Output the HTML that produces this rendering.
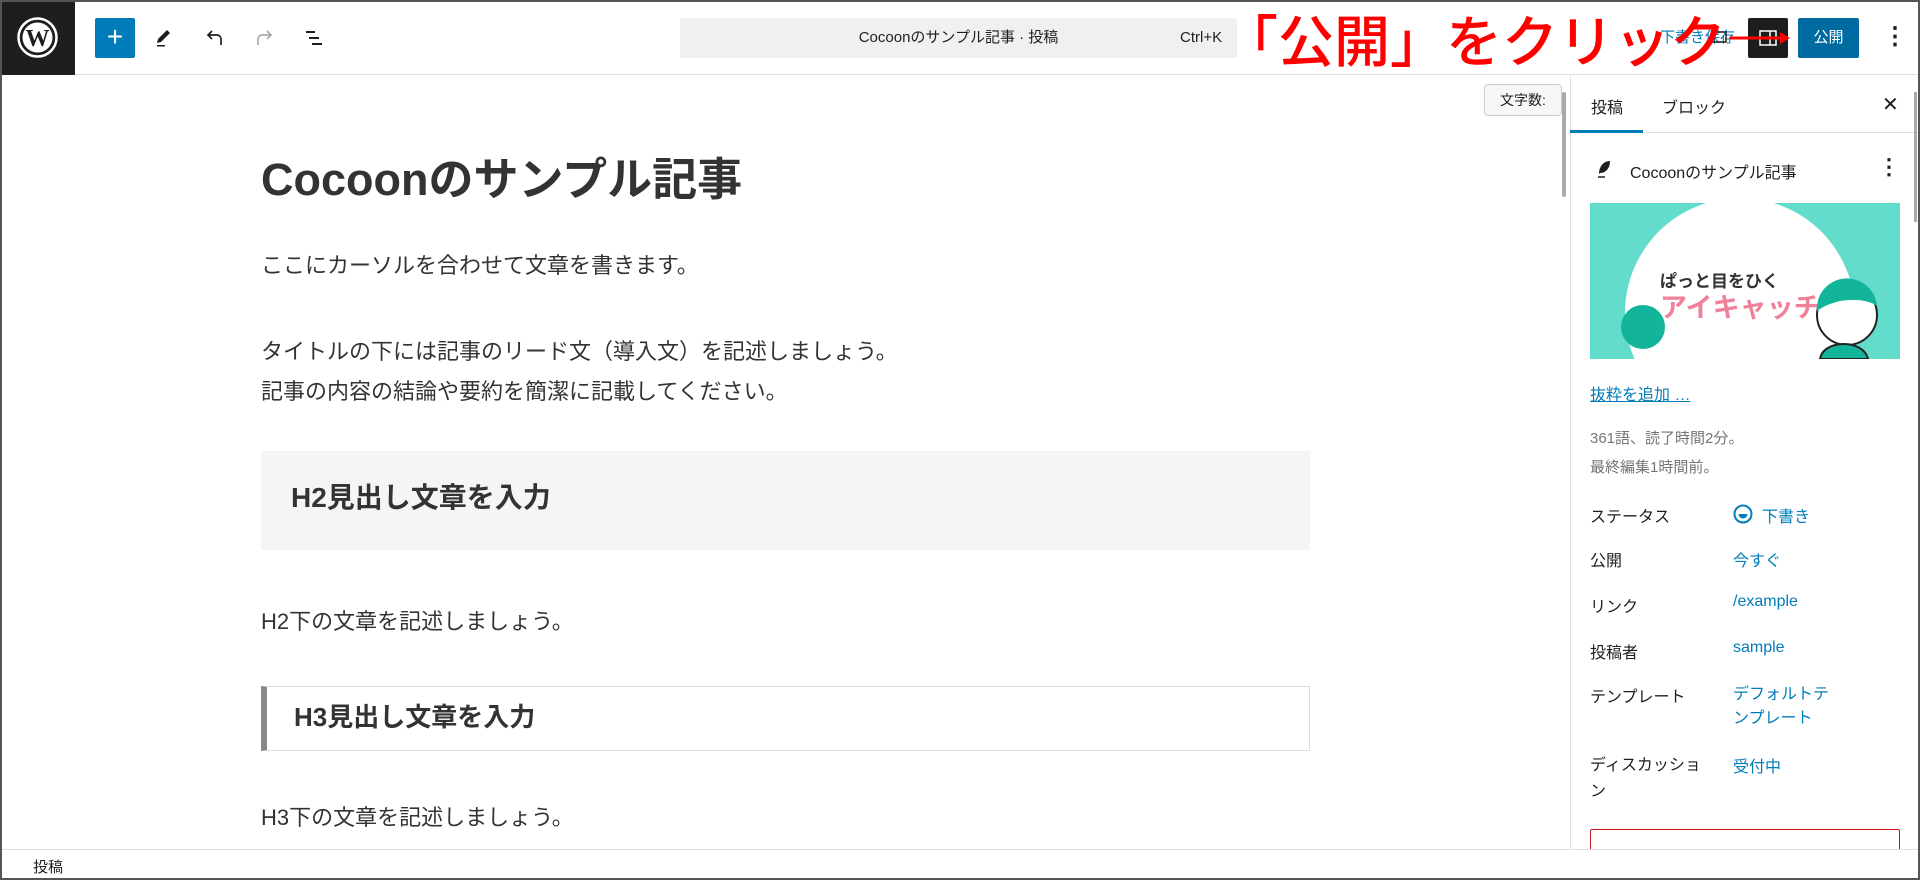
<!DOCTYPE html>
<html><head><meta charset="utf-8"><style>
*{margin:0;padding:0;box-sizing:border-box}
body{width:1920px;height:880px;overflow:hidden;background:#fff;font-family:"Liberation Sans","Noto Sans CJK JP",sans-serif;color:#1e1e1e;position:relative}
.frame{position:absolute;inset:0;border:2px solid #555;pointer-events:none;z-index:50}
.abs{position:absolute}
.top{position:absolute;left:0;top:0;width:1920px;height:75px;border-bottom:1px solid #e0e0e0}
.logo{position:absolute;left:0;top:0;width:75px;height:75px;background:#1e1e1e}
.side{position:absolute;left:1570px;top:75px;width:350px;height:774px;border-left:1px solid #e0e0e0}
.lbl{position:absolute;left:1590px;font-size:16px;color:#1e1e1e}
.val{position:absolute;left:1733px;font-size:16px;color:#007cba}
.p{position:absolute;left:261px;font-size:22px;color:#333;white-space:nowrap}
</style></head><body>
<div class="frame"></div>
<div class="top">
 <div class="logo">
  <svg width="75" height="75" viewBox="0 0 75 75"><circle cx="37.5" cy="37.5" r="19" fill="none" stroke="#fff" stroke-width="2.5"/><circle cx="37.5" cy="37.5" r="15" fill="#fff"/><text x="37.5" y="46" text-anchor="middle" font-family="Liberation Serif" font-weight="bold" font-size="24" fill="#1e1e1e">W</text></svg>
 </div>
 <div class="abs" style="left:95px;top:18px;width:40px;height:40px;background:#007cba;border-radius:2px;color:#fff;font-size:28px;line-height:38px;text-align:center">+</div>
 <svg class="abs" style="left:152px;top:26px" width="24" height="24" viewBox="0 0 24 24"><path d="M15 4l3 3-9 9-4 1 1-4z" fill="#1e1e1e"/><rect x="5" y="19" width="8" height="1.5" fill="#1e1e1e"/></svg>
 <svg class="abs" style="left:203px;top:26px" width="24" height="24" viewBox="0 0 24 24"><path d="M18 19v-6a4 4 0 0 0-4-4H5M9 5L5 9l4 4" fill="none" stroke="#1e1e1e" stroke-width="1.7"/></svg>
 <svg class="abs" style="left:252px;top:26px" width="24" height="24" viewBox="0 0 24 24"><path d="M6 19v-6a4 4 0 0 1 4-4h9M15 5l4 4-4 4" fill="none" stroke="#aaa" stroke-width="1.7"/></svg>
 <svg class="abs" style="left:302px;top:26px" width="24" height="24" viewBox="0 0 24 24"><path d="M4 6h9M7 12h10M10 18h10" stroke="#1e1e1e" stroke-width="2"/></svg>
 <div class="abs" style="left:680px;top:18px;width:557px;height:40px;background:#f0f0f0;border-radius:2px"></div>
 <div class="abs" style="left:680px;top:18px;width:557px;height:40px;line-height:40px;text-align:center;font-size:15px;color:#1e1e1e">Cocoonのサンプル記事 · 投稿</div>
 <div class="abs" style="left:1180px;top:18px;line-height:40px;font-size:15px;color:#1e1e1e">Ctrl+K</div>
 <div class="abs" style="left:1660px;top:26px;font-size:15px;color:#007cba">下書き保存</div>
 <svg class="abs" style="left:1708px;top:26px" width="24" height="24" viewBox="0 0 24 24"><rect x="4" y="6" width="14" height="10" fill="none" stroke="#1e1e1e" stroke-width="1.5"/></svg>
 <div class="abs" style="left:1748px;top:18px;width:40px;height:40px;background:#1e1e1e;border-radius:2px"></div>
 <svg class="abs" style="left:1756px;top:26px" width="24" height="24" viewBox="0 0 24 24"><rect x="4" y="5" width="16" height="14" fill="none" stroke="#fff" stroke-width="1.5"/><path d="M14 5v14" stroke="#fff" stroke-width="1.5"/></svg>
 <div class="abs" style="left:1798px;top:18px;width:61px;height:40px;background:#006ba1;border-radius:2px;color:#fff;font-size:15px;line-height:40px;text-align:center">公開</div>
 <div class="abs" style="left:1883px;top:20px;font-size:24px;line-height:34px;color:#1e1e1e;font-weight:bold">⋮</div>
 <div class="abs" style="left:1222px;top:6px;font-size:56px;line-height:66px;font-weight:500;color:#f00;white-space:nowrap;font-family:'Noto Sans CJK JP',sans-serif">「公開」をクリック</div>
 <svg class="abs" style="left:1730px;top:30px" width="62" height="16" viewBox="0 0 62 16"><path d="M0 8h52" stroke="#f00" stroke-width="3"/><path d="M50 2l10 6-10 6z" fill="#f00"/></svg>
</div>

<!-- editor -->
<div class="abs" style="left:1484px;top:84px;width:78px;height:32px;border:1px solid #ccc;border-radius:4px;background:#f7f7f7;font-size:14px;line-height:30px;text-align:center">文字数:</div>
<div class="abs" style="left:1562px;top:92px;width:4px;height:105px;background:#aaa;border-radius:2px"></div>
<div class="p" style="top:150px;font-size:45px;font-weight:bold;color:#333;line-height:60px">Cocoonのサンプル記事</div>
<div class="p" style="top:250px;line-height:32px">ここにカーソルを合わせて文章を書きます。</div>
<div class="p" style="top:332px;line-height:40px">タイトルの下には記事のリード文（導入文）を記述しましょう。<br>記事の内容の結論や要約を簡潔に記載してください。</div>
<div class="abs" style="left:261px;top:451px;width:1049px;height:99px;background:#f4f5f7"></div>
<div class="p" style="left:291px;top:480px;font-size:28px;font-weight:bold;line-height:36px">H2見出し文章を入力</div>
<div class="p" style="top:606px;line-height:32px">H2下の文章を記述しましょう。</div>
<div class="abs" style="left:261px;top:686px;width:1049px;height:65px;border:1px solid #ddd;border-left:6px solid #888"></div>
<div class="p" style="left:294px;top:700px;font-size:26px;font-weight:bold;line-height:34px">H3見出し文章を入力</div>
<div class="p" style="top:802px;line-height:32px">H3下の文章を記述しましょう。</div>

<!-- sidebar -->
<div class="side"></div>
<div class="abs" style="left:1570px;top:132px;width:350px;height:1px;background:#e0e0e0"></div>
<div class="abs" style="left:1570px;top:130px;width:73px;height:3px;background:#007cba"></div>
<div class="abs" style="left:1591px;top:94px;font-size:16px">投稿</div>
<div class="abs" style="left:1662px;top:94px;font-size:16px">ブロック</div>
<div class="abs" style="left:1882px;top:92px;font-size:20px">✕</div>
<div class="abs" style="left:1914px;top:92px;width:3px;height:130px;background:#aaa"></div>
<svg class="abs" style="left:1594px;top:158px" width="20" height="22" viewBox="0 0 20 22"><path d="M5 16C5 8 10 3 16 3c0 7-4 12-10 12z" fill="#1e1e1e"/><path d="M4 19h7" stroke="#1e1e1e" stroke-width="1.5"/></svg>
<div class="abs" style="left:1630px;top:159px;font-size:16px">Cocoonのサンプル記事</div>
<div class="abs" style="left:1878px;top:154px;font-size:22px;font-weight:bold">⋮</div>
<svg class="abs" style="left:1590px;top:203px" width="310" height="156" viewBox="0 0 310 156">
 <rect width="310" height="156" fill="#64dccb"/>
 <circle cx="150" cy="110" r="115" fill="#fff"/>
 <circle cx="53" cy="124" r="22" fill="#12b49a"/>
 <text x="70" y="84" font-family="Noto Sans CJK JP" font-size="17" font-weight="bold" fill="#333">ぱっと目をひく</text>
 <text x="70" y="114" font-family="Noto Sans CJK JP" font-size="27" font-weight="bold" fill="#f0819b">アイキャッチ</text>
 <circle cx="257" cy="112" r="30" fill="#fff" stroke="#222" stroke-width="2"/>
 <path d="M227 108a30 30 0 0 1 60-5c-10-8-40-10-60 5z" fill="#12b49a"/>
 <path d="M230 156c3-20 44-20 48 0z" fill="#12b49a" stroke="#222" stroke-width="2"/>
</svg>
<div class="abs" style="left:1590px;top:381px;font-size:16px;color:#007cba;text-decoration:underline">抜粋を追加 …</div>
<div class="abs" style="left:1590px;top:424px;font-size:15px;color:#757575;line-height:29px">361語、読了時間2分。<br>最終編集1時間前。</div>
<div class="lbl" style="top:503px">ステータス</div>
<svg class="abs" style="left:1732px;top:503px" width="22" height="22" viewBox="0 0 22 22"><circle cx="11" cy="11" r="8.5" fill="none" stroke="#007cba" stroke-width="2"/><path d="M6.5 11h9a4.5 4.5 0 0 1-9 0z" fill="#007cba"/></svg>
<div class="val" style="left:1762px;top:503px">下書き</div>
<div class="lbl" style="top:547px">公開</div><div class="val" style="top:547px">今すぐ</div>
<div class="lbl" style="top:593px">リンク</div><div class="val" style="top:593px">/example</div>
<div class="lbl" style="top:639px">投稿者</div><div class="val" style="top:639px">sample</div>
<div class="lbl" style="top:683px">テンプレート</div><div class="val" style="top:683px;line-height:24px">デフォルトテ<br>ンプレート</div>
<div class="lbl" style="top:753px;line-height:26px">ディスカッショ<br>ン</div><div class="val" style="top:753px">受付中</div>
<div class="abs" style="left:1590px;top:829px;width:310px;height:30px;border:1px solid #cc1818;border-radius:2px"></div>

<!-- footer -->
<div class="abs" style="left:0;top:849px;width:1920px;height:31px;background:#fff;border-top:1px solid #e0e0e0"></div>
<div class="abs" style="left:33px;top:856px;font-size:15px">投稿</div>
</body></html>
